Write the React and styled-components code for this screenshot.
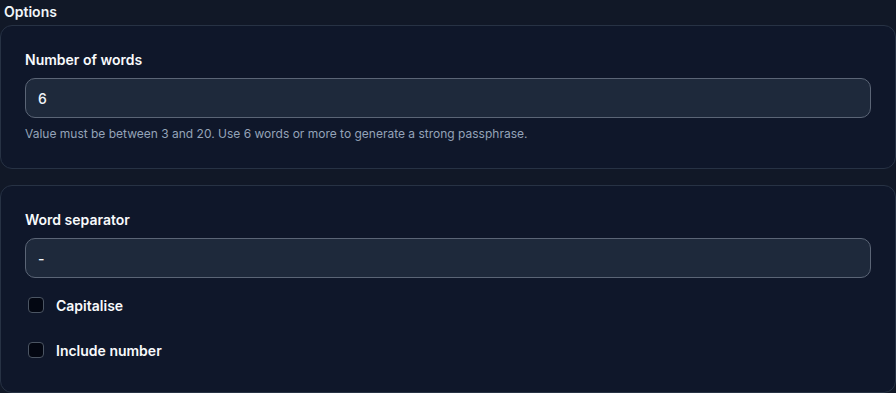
import React from "react";
import styled, { createGlobalStyle } from "styled-components";

const Global = createGlobalStyle`
  html, body { margin: 0; padding: 0; background: #111827; }
  body { font-family: Inter, "Noto Sans", sans-serif; color: #f1f5f9; -webkit-font-smoothing: antialiased; }
  * { box-sizing: border-box; }
`;

const Page = styled.div`
  width: 896px;
  height: 393px;
  overflow: hidden;
  display: flex;
  flex-direction: column;
`;

const Title = styled.h2`
  margin: 0;
  padding: 2px 0 0 4px;
  height: 25px;
  font-size: 14px;
  line-height: 20px;
  font-weight: 600;
  color: #f1f5f9;
`;

const Card = styled.section`
  border: 1px solid #273244;
  border-radius: 12px;
  background: #0f172a;
  padding: 24px 24px ${(p) => p.$pb || 24}px;
  margin-bottom: ${(p) => p.$mb || 0}px;
  display: flex;
  flex-direction: column;
`;

const Label = styled.label`
  font-size: 14px;
  line-height: 20px;
  font-weight: 600;
  color: #f8fafc;
  margin-bottom: 8px;
`;

const Input = styled.input`
  height: 40px;
  width: 100%;
  border: 1px solid #5b6576;
  border-radius: 10px;
  background: #1e293b;
  color: #f1f5f9;
  font-family: inherit;
  font-size: 14px;
  font-weight: 500;
  padding: 0 12px;
  outline: none;
`;

const Hint = styled.p`
  margin: 8px 0 0;
  font-size: 12px;
  line-height: 16px;
  color: #94a3b8;
`;

const CheckList = styled.div`
  margin-top: 9px;
  display: flex;
  flex-direction: column;
  gap: 9px;
`;

const CheckRow = styled.label`
  height: 36px;
  display: flex;
  align-items: center;
  gap: 12px;
  padding-left: 3px;
  font-size: 14px;
  font-weight: 600;
  color: #f8fafc;
`;

const Box = styled.span`
  width: 16px;
  height: 16px;
  border: 1px solid #4b5563;
  border-radius: 4px;
  background: #030712;
  flex: none;
`;

export default function App() {
  return (
    <Page>
      <Global />
      <Title>Options</Title>
      <Card $mb={16} $pb={26}>
        <Label>Number of words</Label>
        <Input defaultValue="6" />
        <Hint>Value must be between 3 and 20. Use 6 words or more to generate a strong passphrase.</Hint>
      </Card>
      <Card>
        <Label>Word separator</Label>
        <Input defaultValue="-" />
        <CheckList>
          <CheckRow>
            <Box />
            Capitalise
          </CheckRow>
          <CheckRow>
            <Box />
            Include number
          </CheckRow>
        </CheckList>
      </Card>
    </Page>
  );
}
